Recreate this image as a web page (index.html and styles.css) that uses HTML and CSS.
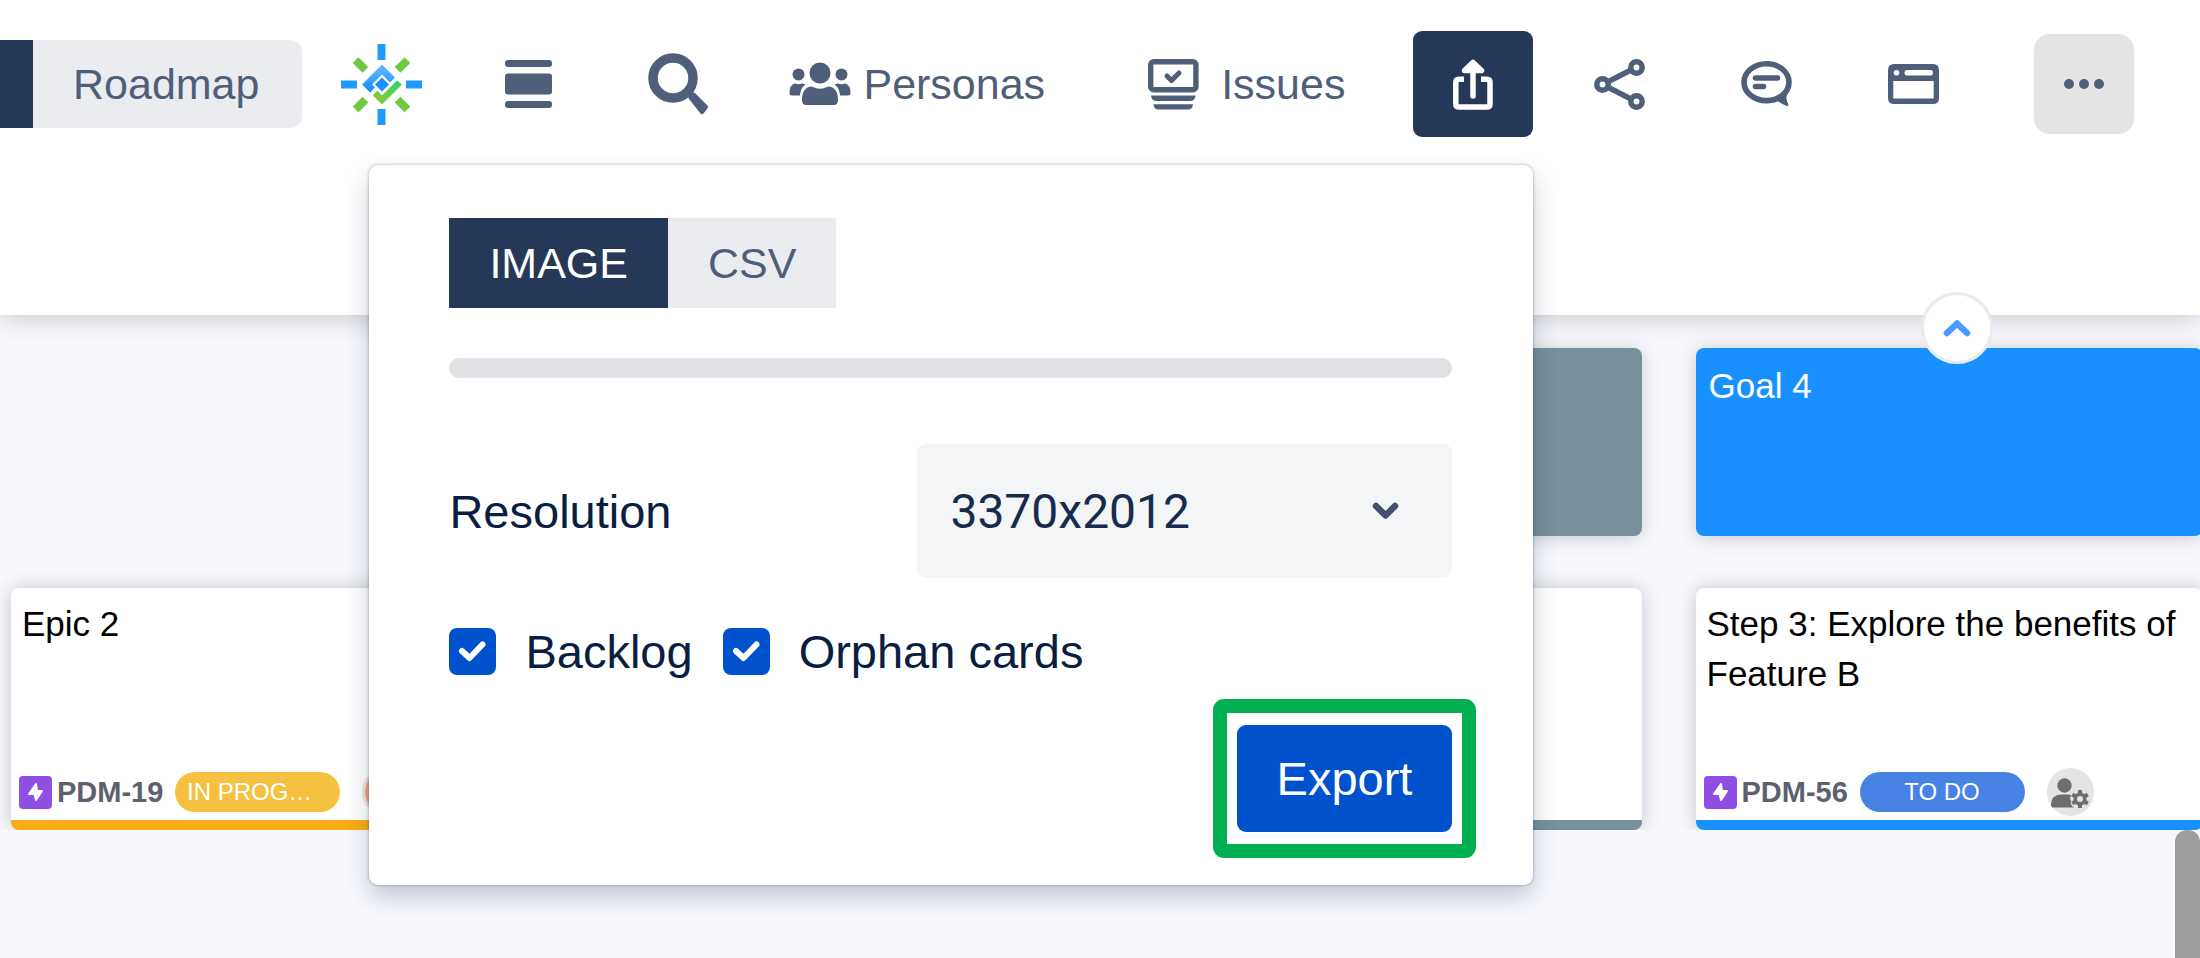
FILE: index.html
```html
<!DOCTYPE html>
<html lang="en">
<head>
    <meta charset="UTF-8">
    <meta name="viewport" content="width=device-width, initial-scale=1.0">
    <title>Story Map</title>
    <link rel="stylesheet" href="styles.css">
</head>
<body>
    <header class="header">
        <div class="toolbar">
            <div class="view-toggle">
                <button class="toggle active" aria-label="Story map"></button>
                <button class="toggle last">Roadmap</button>
            </div>

            <a href="#" class="tool logo" aria-label="Home">
                <svg width="81" height="81" viewBox="0 0 81 81">
                    <defs>
                        <linearGradient id="blue" x1="0" y1="0" x2="0" y2="1">
                            <stop offset="0" stop-color="#5cb3ff"/>
                            <stop offset="1" stop-color="#1890ff"/>
                        </linearGradient>
                        <linearGradient id="green" x1="1" y1="0" x2="0" y2="1">
                            <stop offset="0" stop-color="#36d06c"/>
                            <stop offset="1" stop-color="#8acb30"/>
                        </linearGradient>
                    </defs>
                    <g fill="#1f9bff">
                        <rect x="36.5" y="0" width="8" height="16"/>
                        <rect x="36.5" y="65" width="8" height="16"/>
                        <rect x="0" y="36.5" width="16" height="8"/>
                        <rect x="65" y="36.5" width="16" height="8"/>
                    </g>
                    <g fill="#6cc940">
                        <rect x="-7" y="-4" width="14" height="8" transform="translate(19.5 21) rotate(45)"/>
                        <rect x="-7" y="-4" width="14" height="8" transform="translate(61.5 21) rotate(-45)"/>
                        <rect x="-7" y="-4" width="14" height="8" transform="translate(19.5 60.5) rotate(-45)"/>
                        <rect x="-7" y="-4" width="14" height="8" transform="translate(61.5 60.5) rotate(45)"/>
                    </g>
                    <path d="M51.500 36L41 25.500L26 40.500L31.500 46" fill="none" stroke="url(#blue)" stroke-width="7"/>
                    <path d="M34 49L41 56L58.500 38.500" fill="none" stroke="url(#green)" stroke-width="6.500"/>
                    <path d="M41 33.500L48 40.500L41 47.500L34 40.500Z" fill="#1890ff"/>
                </svg>
            </a>

            <button class="tool layers" aria-label="Card size">
                <svg width="47" height="48" viewBox="0 0 47 48" fill="currentColor">
                    <rect y="0" width="47" height="7" rx="3"/>
                    <rect y="13.500" width="47" height="21" rx="3"/>
                    <rect y="41" width="47" height="7" rx="3"/>
                </svg>
            </button>

            <button class="tool search" aria-label="Search">
                <svg width="61" height="62" viewBox="0 0 61 62">
                    <circle cx="25" cy="25" r="20" fill="none" stroke="currentColor" stroke-width="9.500"/>
                    <path d="M41 46Q39 42 41.500 40Q44 38 47.500 40.500L59 52Q61 54 59 56L55.500 60.500Q54 62 52.500 60.500Z" fill="currentColor"/>
                </svg>
            </button>

            <button class="tool personas">
                <svg width="62" height="44" viewBox="0 0 62 44" fill="currentColor">
                    <circle cx="31" cy="11" r="10.500"/>
                    <circle cx="9.500" cy="12.500" r="6"/>
                    <circle cx="52.500" cy="12.500" r="6"/>
                    <path d="M13 38C13 29 17 24.500 23 24.500Q31 29 39 24.500C45 24.500 49 29 49 38Q49 43 45 43H17Q13 43 13 38Z"/>
                    <path id="side" d="M.500 31C.500 25 3 21.500 6.500 21.500Q9.500 23 12.500 21.500Q15 21.500 16.500 22.500Q11.500 26 11 33.500H3Q.500 33.500 .500 31Z"/>
                    <use href="#side" transform="translate(62 0) scale(-1 1)"/>
                </svg>
                <span>Personas</span>
            </button>

            <button class="tool issues">
                <svg width="51" height="51" viewBox="0 0 51 51">
                    <rect x="2.700" y="2.700" width="45.200" height="28" rx="3" fill="none" stroke="currentColor" stroke-width="5.400"/>
                    <path d="M19 17L23.500 21.500L31 14" fill="none" stroke="currentColor" stroke-width="5" stroke-linecap="round" stroke-linejoin="round"/>
                    <path d="M3 36.500H47.500Q47 42 42 42H8.500Q3.500 42 3 36.500Z" fill="currentColor"/>
                    <path d="M5.500 45.200H45Q44.500 50.500 40 50.500H10.500Q6 50.500 5.500 45.200Z" fill="currentColor"/>
                </svg>
                <span>Issues</span>
            </button>

            <div class="export">
                <button class="export-toggle" aria-label="Export" aria-expanded="true">
                    <svg width="40" height="51" viewBox="0 0 40 51" fill="none" stroke="currentColor">
                        <path d="M11 20.200H6Q2.800 20.200 2.800 23.500V45Q2.800 48 6 48H34Q37 48 37 45V23.500Q37 20.200 34 20.200H28" stroke-width="5.500"/>
                        <path d="M20 8V37" stroke-width="5.500" stroke-linecap="round"/>
                        <path d="M11.500 11.500L20 3.500L28.500 11.500Z" stroke-width="5.500" fill="currentColor" stroke-linejoin="round"/>
                    </svg>
                </button>

                <form class="export-panel" onsubmit="return false">
                    <div class="tabs">
                        <button type="button" class="tab active">IMAGE</button>
                        <button type="button" class="tab">CSV</button>
                    </div>
                    <div class="divider"></div>
                    <div class="field">
                        <label for="resolution">Resolution</label>
                        <div class="select">
                            <select id="resolution">
                                <option>3370x2012</option>
                            </select>
                            <svg width="27" height="18" viewBox="0 0 27 18" fill="none">
                                <path d="M4 4L13.500 13.500L23 4" stroke="currentColor" stroke-width="6.500" stroke-linecap="round" stroke-linejoin="round"/>
                            </svg>
                        </div>
                    </div>
                    <div class="options">
                        <label class="option">
                            <span class="check">
                                <input type="checkbox" checked>
                                <svg width="47" height="47" viewBox="0 0 47 47"><path d="M13 23L20.500 30L33.500 16.500"/></svg>
                            </span>
                            Backlog
                        </label>
                        <label class="option">
                            <span class="check">
                                <input type="checkbox" checked>
                                <svg width="47" height="47" viewBox="0 0 47 47"><path d="M13 23L20.500 30L33.500 16.500"/></svg>
                            </span>
                            Orphan cards
                        </label>
                    </div>
                    <div class="actions">
                        <div class="highlight">
                            <button class="submit">Export</button>
                        </div>
                    </div>
                </form>
            </div>

            <button class="tool share" aria-label="Share">
                <svg width="51" height="51" viewBox="0 0 51 51" fill="none" stroke="currentColor" stroke-width="5.500">
                    <circle cx="8.500" cy="25.500" r="5.700"/>
                    <circle cx="42.500" cy="8.500" r="5.700"/>
                    <circle cx="42.500" cy="42.500" r="5.700"/>
                    <path d="M13.500 23L37 11M13.500 28L37 40"/>
                </svg>
            </button>

            <button class="tool wide" aria-label="Comments">
                <svg width="51" height="46" viewBox="0 0 51 46" fill="none" stroke="currentColor">
                    <ellipse cx="25.500" cy="21.200" rx="22.500" ry="18.400" stroke-width="5.600"/>
                    <path d="M14.500 17H36.500M14.500 25.500H22.500" stroke-width="5.600" stroke-linecap="round"/>
                    <path d="M47 33Q43.500 36 47.500 43.500Q47.500 45 46 45Q40.500 43.500 36 39.500Z" fill="currentColor" stroke="none"/>
                </svg>
            </button>

            <button class="tool wide" aria-label="Window">
                <svg width="51" height="40" viewBox="0 0 51 40">
                    <path fill="currentColor" fill-rule="evenodd" d="M6 0H45Q51 0 51 6V34Q51 40 45 40H6Q0 40 0 34V6Q0 0 6 0ZM5.300 17V34.500H45.700V17Z"/>
                    <circle cx="8.500" cy="8.800" r="2.800" fill="#fff"/>
                    <rect x="16.500" y="6" width="28.500" height="5.600" rx="2.800" fill="#fff"/>
                </svg>
            </button>

            <button class="more" aria-label="More">
                <svg width="42" height="12" viewBox="0 0 42 12" fill="currentColor">
                    <circle cx="6" cy="6" r="5"/>
                    <circle cx="21" cy="6" r="5"/>
                    <circle cx="36" cy="6" r="5"/>
                </svg>
            </button>
        </div>

        <button class="collapse" aria-label="Collapse header">
            <svg width="28" height="18" viewBox="0 0 28 18" fill="none">
                <path d="M4 14L14 4.500L24 14" stroke="currentColor" stroke-width="6.500" stroke-linejoin="round" stroke-linecap="round"/>
            </svg>
        </button>
    </header>

    <main class="board">
        <section class="row">
            <article class="goal third gray"></article>
            <article class="goal">Goal 4</article>
        </section>

        <section class="row">
            <article class="card orange">
                <h3>Epic 2</h3>
                <div class="meta">
                    <svg class="epic" width="33" height="33" viewBox="0 0 33 33">
                        <rect width="33" height="33" rx="4" fill="#904ee2"/>
                        <path d="M17 8L10 18H15.500L17 24L23 15H18Z" fill="#fff" stroke="#fff" stroke-width="2" stroke-linejoin="round"/>
                    </svg>
                    <a href="#" class="key">PDM-19</a>
                    <span class="status progress">IN PROG…</span>
                    <span class="avatar photo"></span>
                </div>
            </article>
            <article class="card third"></article>
            <article class="card blue">
                <h3>Step 3: Explore the benefits of Feature B</h3>
                <div class="meta">
                    <svg class="epic" width="33" height="33" viewBox="0 0 33 33">
                        <rect width="33" height="33" rx="4" fill="#904ee2"/>
                        <path d="M17 8L10 18H15.500L17 24L23 15H18Z" fill="#fff" stroke="#fff" stroke-width="2" stroke-linejoin="round"/>
                    </svg>
                    <a href="#" class="key">PDM-56</a>
                    <span class="status">TO DO</span>
                    <span class="avatar">
                        <svg width="47" height="48" viewBox="0 0 47 48" fill="#6e6e6e">
                            <circle cx="17.500" cy="17.500" r="7.200"/>
                            <path d="M4 37Q4 26.500 14 26.500H21Q23.500 26.500 24.500 27.500Q22 30 24 33Q23 37 27 39.500H6Q4 39.500 4 37Z"/>
                            <circle cx="33" cy="31" r="4.800" fill="none" stroke="#6e6e6e" stroke-width="3.600"/>
                            <path d="M33 22V26M33 36V40M25.200 26.500L28.700 28.500M37.300 33.500L40.800 35.500M25.200 35.500L28.700 33.500M37.300 28.500L40.800 26.500" stroke="#6e6e6e" stroke-width="4"/>
                        </svg>
                    </span>
                </div>
            </article>
        </section>
    </main>
    <div class="scroll-track"><div class="scroll-thumb"></div></div>
</body>
</html>
```
FILE: styles.css
```css
* {
    box-sizing: border-box;
}
body {
    margin: 0;
    min-height: 100vh;
    display: flex;
    flex-direction: column;
    overflow: hidden;
    background-color: #f7f8fd;
    font-family: 'Liberation Sans', Arial, sans-serif;
    color: #091e42;
}
button {
    border: 0;
    margin: 0;
    padding: 0;
    background: none;
    font: inherit;
    color: inherit;
    cursor: pointer;
}
svg {
    display: block;
    flex: none;
}

/* Header */
.header {
    position: relative;
    z-index: 2;
    min-height: 315px;
    background-color: #fff;
    box-shadow: 0 4px 24px rgba(0, 0, 0, 0.18);
    color: #505f79;
    font-size: 43px;
}
.toolbar {
    display: flex;
    align-items: center;
    height: 168px;
    padding-right: 66px;
}
.view-toggle {
    display: flex;
    height: 88px;
}
.toggle {
    width: 33px;
    background-color: #ebecf0;
}
.toggle.last {
    width: auto;
    padding: 0 43px 0 40px;
    border-radius: 0 12px 12px 0;
}
.toggle.active,
.tab.active {
    background-color: #253858;
    color: #fff;
}
.tool {
    display: flex;
    align-items: center;
}
.logo {
    margin-left: 39px;
}
.layers {
    margin-left: 83px;
}
.search {
    margin-left: 96px;
}
.personas {
    gap: 12px;
    margin-left: 80px;
}
.issues {
    gap: 22px;
    margin-left: 103px;
}
.share {
    margin-left: 61px;
}
.wide {
    margin-left: 96px;
}
.more {
    display: flex;
    align-items: center;
    justify-content: center;
    width: 100px;
    height: 100px;
    margin-left: auto;
    border-radius: 16px;
    background-color: #e4e4e4;
}
.collapse {
    position: absolute;
    right: 207px;
    bottom: -49px;
    display: flex;
    align-items: center;
    justify-content: center;
    width: 72px;
    height: 72px;
    border: 3px solid #ebebeb;
    border-radius: 50%;
    background-color: #fff;
    color: #4c9aff;
}

/* Export dropdown */
.export {
    position: relative;
    z-index: 1;
    margin-left: 68px;
}
.export-toggle {
    display: flex;
    align-items: center;
    justify-content: center;
    width: 120px;
    height: 106px;
    border-radius: 9px;
    background-color: #253858;
    color: #fff;
}
.export-panel {
    position: absolute;
    top: 134px;
    right: 0;
    width: 1164px;
    padding: 53px 81px 53px 80px;
    border-radius: 9px;
    background-color: #fff;
    box-shadow: 0 12px 24px rgba(9, 30, 66, 0.22), 0 0 3px rgba(9, 30, 66, 0.4);
    color: #091e42;
    font-size: 47px;
}
.tabs {
    display: flex;
    height: 90px;
    font-size: 43px;
}
.tab {
    padding: 0 40px;
    background-color: #ebecf0;
    color: #505f79;
}
.divider {
    height: 20px;
    margin: 50px 0 66px;
    border-radius: 10px;
    background-color: #dfe1e5;
}
.field {
    display: flex;
    align-items: center;
    justify-content: space-between;
}
.select {
    position: relative;
    width: 535px;
}
.select select {
    appearance: none;
    width: 100%;
    height: 134px;
    padding: 0 80px 0 33px;
    border: 0;
    border-radius: 9px;
    background-color: #f4f5f7;
    color: #172b4d;
    font-family: Roboto, sans-serif;
    font-size: 48px;
}
.select svg {
    position: absolute;
    right: 53px;
    top: 58px;
    color: #42526e;
    pointer-events: none;
}
.options {
    display: flex;
    gap: 30px;
    margin: 50px 0;
}
.option {
    display: flex;
    align-items: center;
    gap: 29px;
    height: 47px;
}
.check {
    position: relative;
}
.check input {
    display: block;
    appearance: none;
    width: 47px;
    height: 47px;
    margin: 0;
    border-radius: 8px;
    background-color: #0052cc;
}
.check svg {
    position: absolute;
    inset: 0;
    fill: none;
    stroke: #fff;
    stroke-width: 6px;
    stroke-linecap: round;
    stroke-linejoin: round;
    pointer-events: none;
}
.actions {
    display: flex;
    justify-content: flex-end;
}
.highlight {
    position: relative;
}
.highlight::after {
    content: '';
    position: absolute;
    inset: -26px -24px;
    border: 14px solid #00b050;
    border-radius: 11px;
    pointer-events: none;
}
.submit {
    display: block;
    height: 107px;
    padding: 0 40px;
    border-radius: 9px;
    background-color: #0052cc;
    color: #fff;
}

/* Board */
.board {
    display: grid;
    gap: 52px;
    padding: 33px 0 0 11px;
    overflow: hidden;
    font-size: 35px;
    line-height: 50px;
}
.row {
    display: grid;
    grid-template-columns: repeat(4, minmax(0, 1fr));
    gap: 54px;
    /* last column runs off the edge */
    margin-right: -3px;
}
.third {
    grid-column: 3;
}
.goal {
    height: 188px;
    padding: 13px;
    border-radius: 8px;
    background-color: #1890ff;
    box-shadow: 0 2px 20px rgba(0, 0, 0, 0.18);
    color: #fff;
}
.gray {
    background-color: #78909c;
}
.card {
    display: flex;
    flex-direction: column;
    justify-content: space-between;
    height: 242px;
    padding: 11px 8px 3px;
    border-bottom: 10px solid #78909c;
    border-radius: 8px;
    background-color: #fff;
    box-shadow: 0 0 20px rgba(0, 0, 0, 0.2);
}
.card h3 {
    margin: 0;
    padding-left: 3px;
    font-size: inherit;
    font-weight: normal;
    color: #000;
}
.orange {
    border-color: #fbad18;
}
.blue {
    border-color: #1890ff;
}
.meta {
    display: flex;
    align-items: center;
}
.key {
    width: 118px;
    margin-left: 5px;
    color: #5e606e;
    font-size: 29px;
    font-weight: bold;
    text-decoration: none;
}
.status {
    width: 165px;
    height: 40px;
    border-radius: 20px;
    background-color: #4782e4;
    color: #fff;
    font-size: 24px;
    line-height: 40px;
    text-align: center;
}
.progress {
    padding-left: 12px;
    background-color: #f6c140;
    text-align: left;
}
.avatar {
    width: 47px;
    height: 48px;
    margin-left: 22px;
    border-radius: 50%;
    background-color: #e4e4e4;
}
.photo {
    border: 3px solid #f6e0d4;
    background-color: #f2a184;
}
.scroll-track {
    display: flex;
    flex: 1;
    justify-content: flex-end;
}
.scroll-thumb {
    width: 25px;
    border-radius: 12px 12px 0 0;
    background-color: #9e9e9e;
}
```
